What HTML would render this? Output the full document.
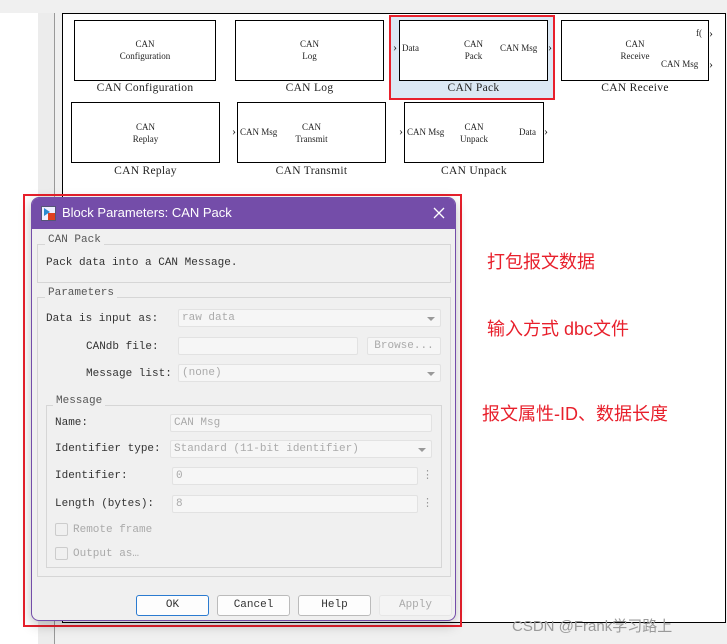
<!DOCTYPE html>
<html><head><meta charset="utf-8"><style>
*{margin:0;padding:0;box-sizing:border-box}
body{width:727px;height:644px;background:#f0f0f0;position:relative;overflow:hidden;font-family:"Liberation Mono","Noto Serif CJK SC",monospace}
.a{position:absolute}
.blk{position:absolute;border:1px solid #000;background:#fff;font-size:9px;text-align:center;color:#222;line-height:12px;font-family:"Liberation Serif",serif}
.lbl{position:absolute;font-size:11.5px;color:#222;text-align:center;font-family:"Liberation Serif",serif;letter-spacing:0.3px}
.port{position:absolute;font-size:9px;color:#222;font-family:"Liberation Serif",serif}
.cn{position:absolute;color:#e8202c;font-family:"Liberation Sans","Noto Sans CJK SC",sans-serif;font-size:18px}
.dlg{font-size:11px;color:#333}
.gb{position:absolute;border:1px solid #d6d6d6}
.gt{position:absolute;background:#f0f0f0;padding:0 3px;font-size:11px;color:#555}
.fld{position:absolute;background:#f6f6f6;border:1px solid #e2e2e2;border-radius:2px;font-size:11px;color:#aaa;padding-left:3px;line-height:16px}
.dd:after{content:"";position:absolute;right:5px;top:7px;border-left:4px solid transparent;border-right:4px solid transparent;border-top:4px solid #999}
.btn{position:absolute;height:21px;border:1px solid #bbb;border-radius:3px;background:#fdfdfd;font-size:11px;text-align:center;line-height:19px;color:#333}
</style></head><body>
<div class="a" style="left:0;top:13px;width:38px;height:631px;background:#fff"></div>
<div class="a" style="left:38px;top:13px;width:17px;height:631px;background:#ececec;border-right:1px solid #999"></div>
<div class="a" style="left:62px;top:13px;width:664px;height:610px;background:#fff;border:1px solid #000"></div>

<div class="a" style="left:389px;top:15px;width:166px;height:85px;background:#dce8f4;border:2px solid #e8202c"></div>

<div class="blk" style="left:74px;top:20px;width:142px;height:61px;padding-top:17px">CAN<br>Configuration</div>
<div class="lbl" style="left:74px;top:82px;width:142px">CAN Configuration</div>
<div class="blk" style="left:235px;top:20px;width:149px;height:61px;padding-top:17px">CAN<br>Log</div>
<div class="lbl" style="left:235px;top:82px;width:149px">CAN Log</div>
<div class="blk" style="left:399px;top:20px;width:149px;height:61px;padding-top:17px">CAN<br>Pack</div>
<div class="port" style="left:402px;top:43px">Data</div><div class="port" style="left:500px;top:43px">CAN Msg</div>
<div class="port" style="left:393px;top:40px;font-size:12px">›</div><div class="port" style="left:548px;top:40px;font-size:12px">›</div>
<div class="lbl" style="left:399px;top:82px;width:149px">CAN Pack</div>
<div class="blk" style="left:561px;top:20px;width:148px;height:61px;padding-top:17px">CAN<br>Receive</div>
<div class="port" style="left:696px;top:28px">f(</div><div class="port" style="left:661px;top:59px">CAN Msg</div>
<div class="port" style="left:709px;top:26px;font-size:12px">›</div><div class="port" style="left:709px;top:57px;font-size:12px">›</div>
<div class="lbl" style="left:561px;top:82px;width:148px">CAN Receive</div>

<div class="blk" style="left:71px;top:102px;width:149px;height:61px;padding-top:18px">CAN<br>Replay</div>
<div class="lbl" style="left:71px;top:165px;width:149px">CAN Replay</div>
<div class="blk" style="left:237px;top:102px;width:149px;height:61px;padding-top:18px">CAN<br>Transmit</div>
<div class="port" style="left:240px;top:127px">CAN Msg</div><div class="port" style="left:232px;top:124px;font-size:12px">›</div>
<div class="lbl" style="left:237px;top:165px;width:149px">CAN Transmit</div>
<div class="blk" style="left:404px;top:102px;width:140px;height:61px;padding-top:18px">CAN<br>Unpack</div>
<div class="port" style="left:407px;top:127px">CAN Msg</div><div class="port" style="left:519px;top:127px">Data</div>
<div class="port" style="left:399px;top:124px;font-size:12px">›</div><div class="port" style="left:544px;top:124px;font-size:12px">›</div>
<div class="lbl" style="left:404px;top:165px;width:140px">CAN Unpack</div>

<div class="cn" style="left:487px;top:248px">打包报文数据</div>
<div class="cn" style="left:487px;top:315px">输入方式 dbc文件</div>
<div class="cn" style="left:482px;top:400px">报文属性-ID、数据长度</div>
<div class="a" style="left:512px;top:615px;font-family:'Liberation Sans','Noto Sans CJK SC',sans-serif;font-size:15px;color:#9a9a9a">CSDN @Frank学习路上</div>

<div class="a" style="left:23px;top:194px;width:439px;height:433px;border:2px solid #e8202c"></div>
<div class="a dlg" style="left:31px;top:197px;width:425px;height:424px;background:#f0f0f0;border:1px solid #744da9;border-radius:8px;overflow:hidden;box-shadow:0 4px 12px rgba(0,0,0,.25)">
 <div class="a" style="left:0;top:0;width:425px;height:31px;background:#744da9"></div>
 <div class="a" style="left:9px;top:8px;width:15px;height:15px;background:#eef;border:1px solid #557"><div class="a" style="left:6px;top:6px;width:7px;height:7px;background:#e04020"></div><div class="a" style="left:2px;top:1px;border-left:6px solid #2a8ad0;border-top:4px solid transparent;border-bottom:4px solid transparent"></div></div>
 <div class="a" style="left:30px;top:7px;color:#fff;font-family:'Liberation Sans',sans-serif;font-size:13px">Block Parameters: CAN Pack</div>
 <svg class="a" style="left:401px;top:9px" width="12" height="12"><path d="M1 1L11 11M11 1L1 11" stroke="#fff" stroke-width="1.3"/></svg>

 <div class="gb" style="left:5px;top:46px;width:414px;height:39px"></div>
 <div class="gt" style="left:13px;top:36px">CAN Pack</div>
 <div class="a" style="left:14px;top:59px">Pack data into a CAN Message.</div>

 <div class="gb" style="left:5px;top:99px;width:414px;height:280px"></div>
 <div class="gt" style="left:13px;top:89px">Parameters</div>
 <div class="a" style="left:14px;top:115px">Data is input as:</div>
 <div class="fld dd" style="left:146px;top:111px;width:263px;height:18px">raw data</div>
 <div class="a" style="left:54px;top:143px">CANdb file:</div>
 <div class="fld" style="left:146px;top:139px;width:180px;height:18px"></div>
 <div class="fld" style="left:335px;top:139px;width:74px;height:18px;text-align:center;padding:0">Browse...</div>
 <div class="a" style="left:54px;top:170px">Message list:</div>
 <div class="fld dd" style="left:146px;top:166px;width:263px;height:18px">(none)</div>

 <div class="gb" style="left:14px;top:207px;width:396px;height:163px"></div>
 <div class="gt" style="left:21px;top:197px">Message</div>
 <div class="a" style="left:23px;top:219px">Name:</div>
 <div class="fld" style="left:138px;top:216px;width:262px;height:18px">CAN Msg</div>
 <div class="a" style="left:23px;top:245px">Identifier type:</div>
 <div class="fld dd" style="left:138px;top:242px;width:262px;height:18px">Standard (11-bit identifier)</div>
 <div class="a" style="left:23px;top:272px">Identifier:</div>
 <div class="fld" style="left:140px;top:269px;width:246px;height:18px">0</div>
 <div class="a" style="left:390px;top:270px;color:#999">⋮</div>
 <div class="a" style="left:23px;top:300px">Length (bytes):</div>
 <div class="fld" style="left:140px;top:297px;width:246px;height:18px">8</div>
 <div class="a" style="left:390px;top:298px;color:#999">⋮</div>
 <div class="a" style="left:23px;top:325px;width:13px;height:13px;border:1px solid #ccc;border-radius:2px"></div>
 <div class="a" style="left:41px;top:326px;color:#aaa">Remote frame</div>
 <div class="a" style="left:23px;top:349px;width:13px;height:13px;border:1px solid #ccc;border-radius:2px"></div>
 <div class="a" style="left:41px;top:350px;color:#aaa">Output as…</div>

 <div class="btn" style="left:104px;top:397px;width:73px;border-color:#2b7bd0">OK</div>
 <div class="btn" style="left:185px;top:397px;width:73px">Cancel</div>
 <div class="btn" style="left:266px;top:397px;width:73px">Help</div>
 <div class="btn" style="left:347px;top:397px;width:73px;border-color:#e6e6e6;color:#aaa;background:#f4f4f4">Apply</div>
</div>
</body></html>
